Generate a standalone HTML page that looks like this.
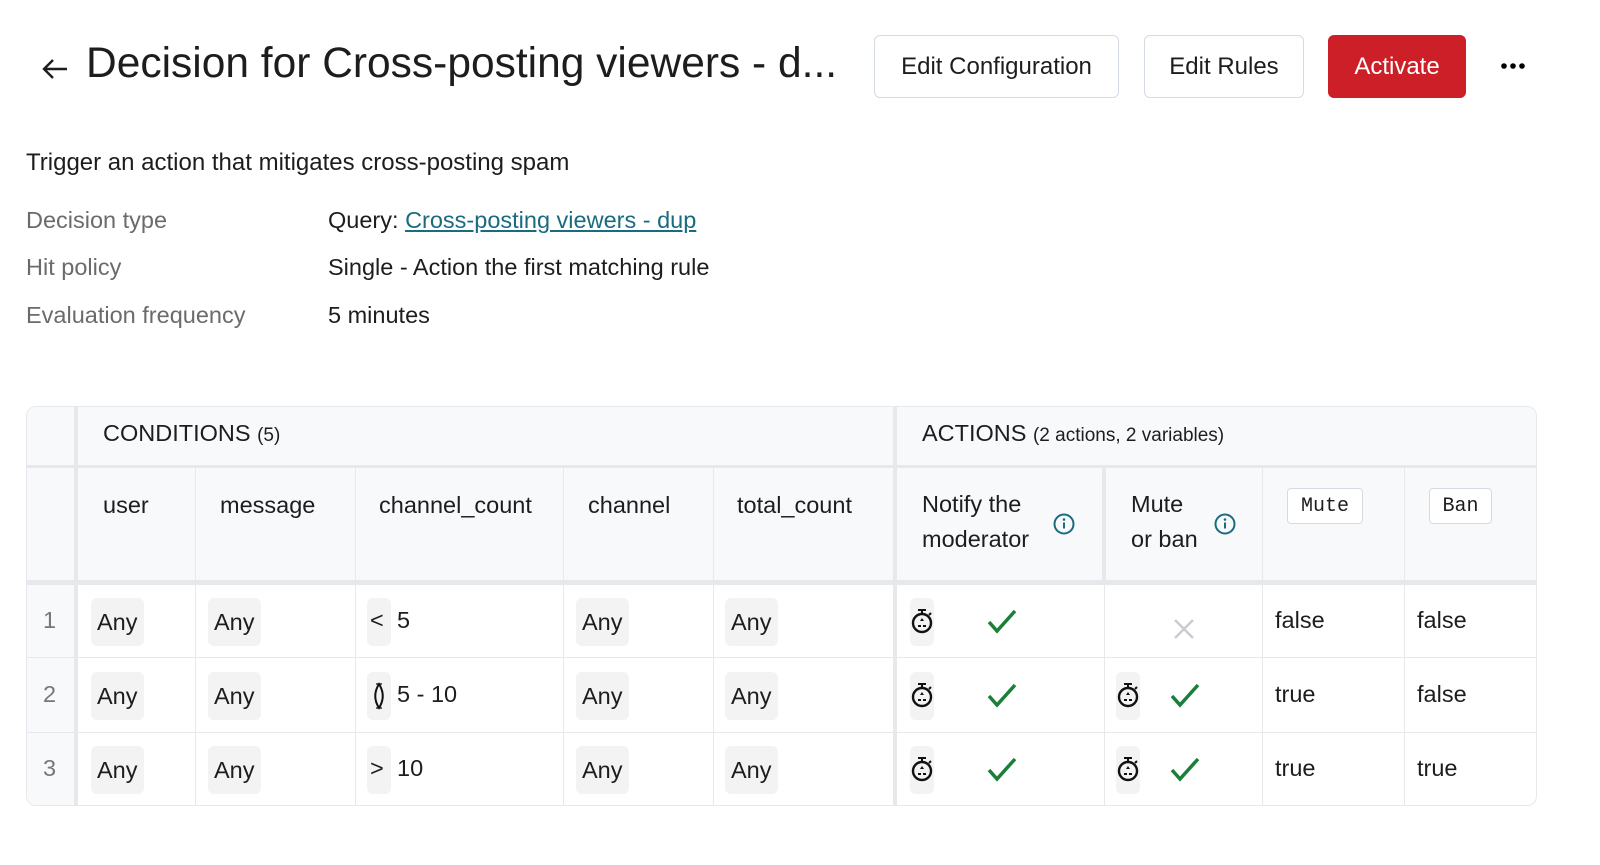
<!DOCTYPE html>
<html><head><meta charset="utf-8"><style>
*{margin:0;padding:0;box-sizing:border-box}
body{width:1600px;height:865px;background:#fff;font-family:"Liberation Sans",sans-serif;color:#1d1d1f;position:relative;overflow:hidden}
.a{position:absolute;white-space:nowrap}
.btn{position:absolute;top:35px;height:63px;border:1px solid #d5dbe3;border-radius:6px;background:#fff;font-size:24px;display:flex;align-items:center;justify-content:center;color:#1d1d1f}
.lbl{color:#6b6b6b;font-size:23.5px}
.val{font-size:23.5px}
.h{position:absolute;background:#f8f9fb}
.vl{position:absolute;background:#e6e8eb;width:1px}
.hl{position:absolute;background:#e6e8eb;height:1px}
.t{position:absolute;font-size:23.5px;white-space:nowrap}
.pill{position:absolute;background:#f3f3f3;border-radius:6px;height:48px;font-size:23.5px;display:flex;align-items:center;padding:0 6px}
.sw{position:absolute;background:#f3f3f3;border-radius:6px;width:24px;height:48px}
.code{position:absolute;top:488px;height:36px;border:1px solid #d5dbe3;border-radius:4px;background:#fff;font-family:"Liberation Mono",monospace;font-size:20px;display:flex;align-items:center;justify-content:center}
</style></head><body>

<svg class="a" style="left:40px;top:56px" width="30" height="26" viewBox="0 0 30 26"><path d="M27 13H4M13 4L4 13l9 9" fill="none" stroke="#1d1d1f" stroke-width="2.4"/></svg>
<div class="a" style="left:86px;top:40px;font-size:42.5px">Decision for Cross-posting viewers - d...</div>

<div class="btn" style="left:874px;width:245px">Edit Configuration</div>
<div class="btn" style="left:1144px;width:160px">Edit Rules</div>
<div class="btn" style="left:1328px;width:138px;background:#cc1f27;border-color:#cc1f27;color:#fff">Activate</div>
<svg class="a" style="left:1500px;top:62px" width="28" height="8"><circle cx="4" cy="4" r="2.8"/><circle cx="13" cy="4" r="2.8"/><circle cx="22" cy="4" r="2.8"/></svg>

<div class="a val" style="left:26px;top:149px;font-size:24px">Trigger an action that mitigates cross-posting spam</div>
<div class="a lbl" style="left:26px;top:207px">Decision type</div>
<div class="a val" style="left:328px;top:207px">Query: <span style="color:#1b6b80;text-decoration:underline">Cross-posting viewers - dup</span></div>
<div class="a lbl" style="left:26px;top:254px">Hit policy</div>
<div class="a val" style="left:328px;top:254px">Single - Action the first matching rule</div>
<div class="a lbl" style="left:26px;top:302px">Evaluation frequency</div>
<div class="a val" style="left:328px;top:302px">5 minutes</div>

<div class="a" style="left:26px;top:406px;width:1511px;height:400px;border:1px solid #e6e8eb;border-radius:10px;overflow:hidden"></div>
<div class="h" style="left:27px;top:407px;width:1509px;height:175px;border-radius:10px 10px 0 0"></div>
<div class="h" style="left:27px;top:582px;width:48px;height:223px;border-radius:0 0 0 10px"></div>
<div class="hl" style="left:27px;top:465px;width:1509px;height:3px"></div>
<div class="hl" style="left:27px;top:580px;width:1509px;height:5px"></div>
<div class="hl" style="left:27px;top:657px;width:1509px"></div>
<div class="hl" style="left:27px;top:732px;width:1509px"></div>
<div class="vl" style="left:74px;top:407px;height:398px;width:4px"></div>
<div class="vl" style="left:893px;top:407px;height:398px;width:4px"></div>
<div class="vl" style="left:1102px;top:468px;height:112px;width:4px"></div>
<div class="vl" style="left:1104px;top:585px;height:220px"></div>
<div class="vl" style="left:195px;top:468px;height:337px"></div>
<div class="vl" style="left:355px;top:468px;height:337px"></div>
<div class="vl" style="left:563px;top:468px;height:337px"></div>
<div class="vl" style="left:713px;top:468px;height:337px"></div>
<div class="vl" style="left:1262px;top:468px;height:337px"></div>
<div class="vl" style="left:1404px;top:468px;height:337px"></div>

<div class="t" style="left:103px;top:420px;font-size:23.5px">CONDITIONS <span style="font-size:19px">(5)</span></div>
<div class="t" style="left:922px;top:420px;font-size:23.5px">ACTIONS <span style="font-size:19px">(2 actions, 2 variables)</span></div>

<div class="t" style="left:103px;top:492px">user</div>
<div class="t" style="left:220px;top:492px">message</div>
<div class="t" style="left:379px;top:492px">channel_count</div>
<div class="t" style="left:588px;top:492px">channel</div>
<div class="t" style="left:737px;top:492px">total_count</div>
<div class="t" style="left:922px;top:487px;line-height:35px">Notify the<br>moderator</div>
<div class="t" style="left:1131px;top:487px;line-height:35px">Mute<br>or ban</div>
<svg class="a" style="left:1053px;top:513px" width="22" height="22"><circle cx="11" cy="11" r="9.5" fill="none" stroke="#1b6b80" stroke-width="2"/><path d="M11 9.5v6" stroke="#1b6b80" stroke-width="2"/><circle cx="11" cy="6.5" r="1.3" fill="#1b6b80"/></svg>
<svg class="a" style="left:1214px;top:513px" width="22" height="22"><circle cx="11" cy="11" r="9.5" fill="none" stroke="#1b6b80" stroke-width="2"/><path d="M11 9.5v6" stroke="#1b6b80" stroke-width="2"/><circle cx="11" cy="6.5" r="1.3" fill="#1b6b80"/></svg>
<div class="code" style="left:1287px;width:76px">Mute</div>
<div class="code" style="left:1429px;width:63px">Ban</div>

<div class="t" style="left:43px;top:607px;color:#777">1</div>
<div class="t" style="left:43px;top:681px;color:#777">2</div>
<div class="t" style="left:43px;top:755px;color:#777">3</div>

<div class="pill" style="left:91px;top:598px">Any</div>
<div class="pill" style="left:208px;top:598px">Any</div>
<div class="pill" style="left:576px;top:598px">Any</div>
<div class="pill" style="left:725px;top:598px">Any</div>
<div class="pill" style="left:91px;top:672px">Any</div>
<div class="pill" style="left:208px;top:672px">Any</div>
<div class="pill" style="left:576px;top:672px">Any</div>
<div class="pill" style="left:725px;top:672px">Any</div>
<div class="pill" style="left:91px;top:746px">Any</div>
<div class="pill" style="left:208px;top:746px">Any</div>
<div class="pill" style="left:576px;top:746px">Any</div>
<div class="pill" style="left:725px;top:746px">Any</div>

<div class="sw" style="left:367px;top:598px"></div><div class="t" style="left:370px;top:607px">&lt;</div><div class="t" style="left:397px;top:607px">5</div>
<div class="sw" style="left:367px;top:672px"></div>
<svg class="a" style="left:372px;top:682px" width="14" height="28"><path d="M7 2C2 10 2 18 7 26C12 18 12 10 7 2Z" fill="none" stroke="#111" stroke-width="2"/><path d="M4 2h6M4 26h6" stroke="#111" stroke-width="1.2"/></svg>
<div class="t" style="left:397px;top:681px">5 - 10</div>
<div class="sw" style="left:367px;top:746px"></div><div class="t" style="left:370px;top:755px">&gt;</div><div class="t" style="left:397px;top:755px">10</div>

<svg width="0" height="0" style="position:absolute"><defs>
<symbol id="tm" viewBox="0 0 24 28"><path d="M8 3h8" stroke="#111" stroke-width="2"/><path d="M12 3v4" stroke="#111" stroke-width="2"/><circle cx="12" cy="16" r="9" fill="none" stroke="#111" stroke-width="2.4"/><path d="M19 8l2-2" stroke="#111" stroke-width="2"/><path d="M12 11l-2 3h4z M8 18h3v2H8z M13 18h3v2h-3z" fill="#111"/></symbol>
<symbol id="ck" viewBox="0 0 30 26"><path d="M2 14l8 9L28 3" fill="none" stroke="#1a7f37" stroke-width="3.5"/></symbol>
</defs></svg>
<div class="sw" style="left:910px;top:598px"></div><svg class="a" style="left:910px;top:607px" width="24" height="28"><use href="#tm"/></svg>
<div class="sw" style="left:910px;top:672px"></div><svg class="a" style="left:910px;top:681px" width="24" height="28"><use href="#tm"/></svg>
<div class="sw" style="left:910px;top:746px"></div><svg class="a" style="left:910px;top:755px" width="24" height="28"><use href="#tm"/></svg>
<div class="sw" style="left:1116px;top:672px"></div><svg class="a" style="left:1116px;top:681px" width="24" height="28"><use href="#tm"/></svg>
<div class="sw" style="left:1116px;top:746px"></div><svg class="a" style="left:1116px;top:755px" width="24" height="28"><use href="#tm"/></svg>
<svg class="a" style="left:987px;top:608px" width="30" height="26"><use href="#ck"/></svg>
<svg class="a" style="left:987px;top:682px" width="30" height="26"><use href="#ck"/></svg>
<svg class="a" style="left:987px;top:756px" width="30" height="26"><use href="#ck"/></svg>
<svg class="a" style="left:1170px;top:682px" width="30" height="26"><use href="#ck"/></svg>
<svg class="a" style="left:1170px;top:756px" width="30" height="26"><use href="#ck"/></svg>
<svg class="a" style="left:1173px;top:618px" width="22" height="22"><path d="M2 2l18 18M20 2L2 20" stroke="#c9ccd1" stroke-width="2.5"/></svg>

<div class="t" style="left:1275px;top:607px">false</div>
<div class="t" style="left:1417px;top:607px">false</div>
<div class="t" style="left:1275px;top:681px">true</div>
<div class="t" style="left:1417px;top:681px">false</div>
<div class="t" style="left:1275px;top:755px">true</div>
<div class="t" style="left:1417px;top:755px">true</div>
</body></html>
